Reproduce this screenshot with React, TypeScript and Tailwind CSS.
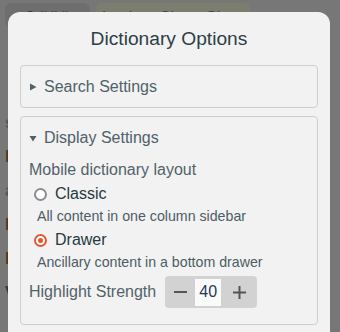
import React, { useState } from 'react';

const font = { fontFamily: '"Liberation Sans", Arial, sans-serif' };

function Triangle({ open }: { open: boolean }) {
  return (
    <svg width="8" height="8" viewBox="0 0 8 8" className="shrink-0 fill-[#4f6169]">
      {open ? <polygon points="0.5,2 7.5,2 4,7.5" /> : <polygon points="1,0.5 7.5,4 1,7.5" />}
    </svg>
  );
}

function Radio({ checked }: { checked: boolean }) {
  return checked ? (
    <span className="flex h-[13px] w-[13px] shrink-0 items-center justify-center rounded-full border-2 border-[#e4572e] bg-white">
      <span className="h-[5px] w-[5px] rounded-full bg-[#e4572e]" />
    </span>
  ) : (
    <span className="h-[13px] w-[13px] shrink-0 rounded-full border-2 border-[#8e8a94] bg-white" />
  );
}

function Option({
  label,
  description,
  checked,
  onSelect
}: {
  label: string;
  description: string;
  checked: boolean;
  onSelect: () => void;
}) {
  return (
    <div className="mb-[2px]" onClick={onSelect}>
      <div className="flex items-center gap-[8px] pl-[5px] text-[16px] leading-[24px] text-[#263940]">
        <Radio checked={checked} />
        <span>{label}</span>
      </div>
      <div className="pl-[8px] text-[14.2px] leading-[20px] text-[#4d5d65]">{description}</div>
    </div>
  );
}

export default function App() {
  const [layout, setLayout] = useState<'classic' | 'drawer'>('drawer');
  const [strength, setStrength] = useState(40);

  return (
    <div className="relative h-[332px] w-[340px] overflow-hidden bg-[#777777]" style={font}>
      {/* page behind the dimmed backdrop */}
      <div className="flex gap-[6px] px-[5px] pt-[3px]">
        <div className="flex h-[24px] w-[85px] items-start justify-center rounded-[6px] bg-[#6e6e6e] pt-[3px] text-[16px] text-[#3a3a3a]">
          ā ǎ ǐ ǒ
        </div>
        <div className="flex h-[24px] w-[154px] items-start rounded-[6px] bg-[#7b7e6f] pl-[6px] pt-[3px] text-[16px] text-[#3e4236]">
          Lookup Cheat Sheet
        </div>
      </div>
      <div className="mt-[84px] flex flex-col gap-[10px] pl-[5px] text-[16px] font-bold leading-[24px]">
        <span className="text-[#555]">s</span>
        <span className="text-[#4a3a22]">l</span>
        <span className="text-[#555]">á</span>
        <span className="text-[#4a3a22]">l</span>
        <span className="text-[#4a3a22]">l</span>
        <span className="text-[#263a52]">V</span>
      </div>

      {/* modal */}
      <div className="absolute left-[8px] top-[12px] h-[340px] w-[322px] rounded-[12px] bg-[#f2f2f2] px-[12px] pt-[15px]">
        <h2 className="text-center text-[19.2px] leading-[24px] text-[#2c3e46]">Dictionary Options</h2>

        <div className="mt-[14px] rounded-[4px] border border-[#cfcfcf]">
          <div className="flex items-center gap-[7px] px-[8px] py-[8px] text-[16px] leading-[25px] text-[#4f6169]">
            <Triangle open={false} />
            <span>Search Settings</span>
          </div>
        </div>

        <div className="mt-[8px] rounded-[4px] border border-[#cfcfcf] px-[8px] pb-[16px]">
          <div className="flex items-center gap-[7px] py-[8px] text-[16px] leading-[25px] text-[#4f6169]">
            <Triangle open={true} />
            <span>Display Settings</span>
          </div>
          <div className="text-[16px] leading-[24px] text-[#52626a]">Mobile dictionary layout</div>
          <Option
            label="Classic"
            description="All content in one column sidebar"
            checked={layout === 'classic'}
            onSelect={() => setLayout('classic')}
          />
          <Option
            label="Drawer"
            description="Ancillary content in a bottom drawer"
            checked={layout === 'drawer'}
            onSelect={() => setLayout('drawer')}
          />
          <div className="mt-[4px] flex items-center gap-[9px]">
            <span className="text-[16px] leading-[24px] text-[#52626a]">Highlight Strength</span>
            <div className="flex h-[32px] items-center rounded-[4px] bg-[#d2d2d2]">
              <button
                className="flex h-full w-[30px] items-center justify-center"
                onClick={() => setStrength(s => s - 1)}
              >
                <svg width="13" height="2" viewBox="0 0 13 2">
                  <rect width="13" height="2" fill="#555" />
                </svg>
              </button>
              <div className="flex h-[27px] w-[26px] items-center justify-center bg-[#fafafa] text-[16px] text-[#1f3a58]">
                {strength}
              </div>
              <button
                className="flex h-full w-[36px] items-center justify-center"
                onClick={() => setStrength(s => s + 1)}
              >
                <svg width="13" height="13" viewBox="0 0 13 13">
                  <rect y="5.5" width="13" height="2" fill="#555" />
                  <rect x="5.5" width="2" height="13" fill="#555" />
                </svg>
              </button>
            </div>
          </div>
        </div>
      </div>
    </div>
  );
}
